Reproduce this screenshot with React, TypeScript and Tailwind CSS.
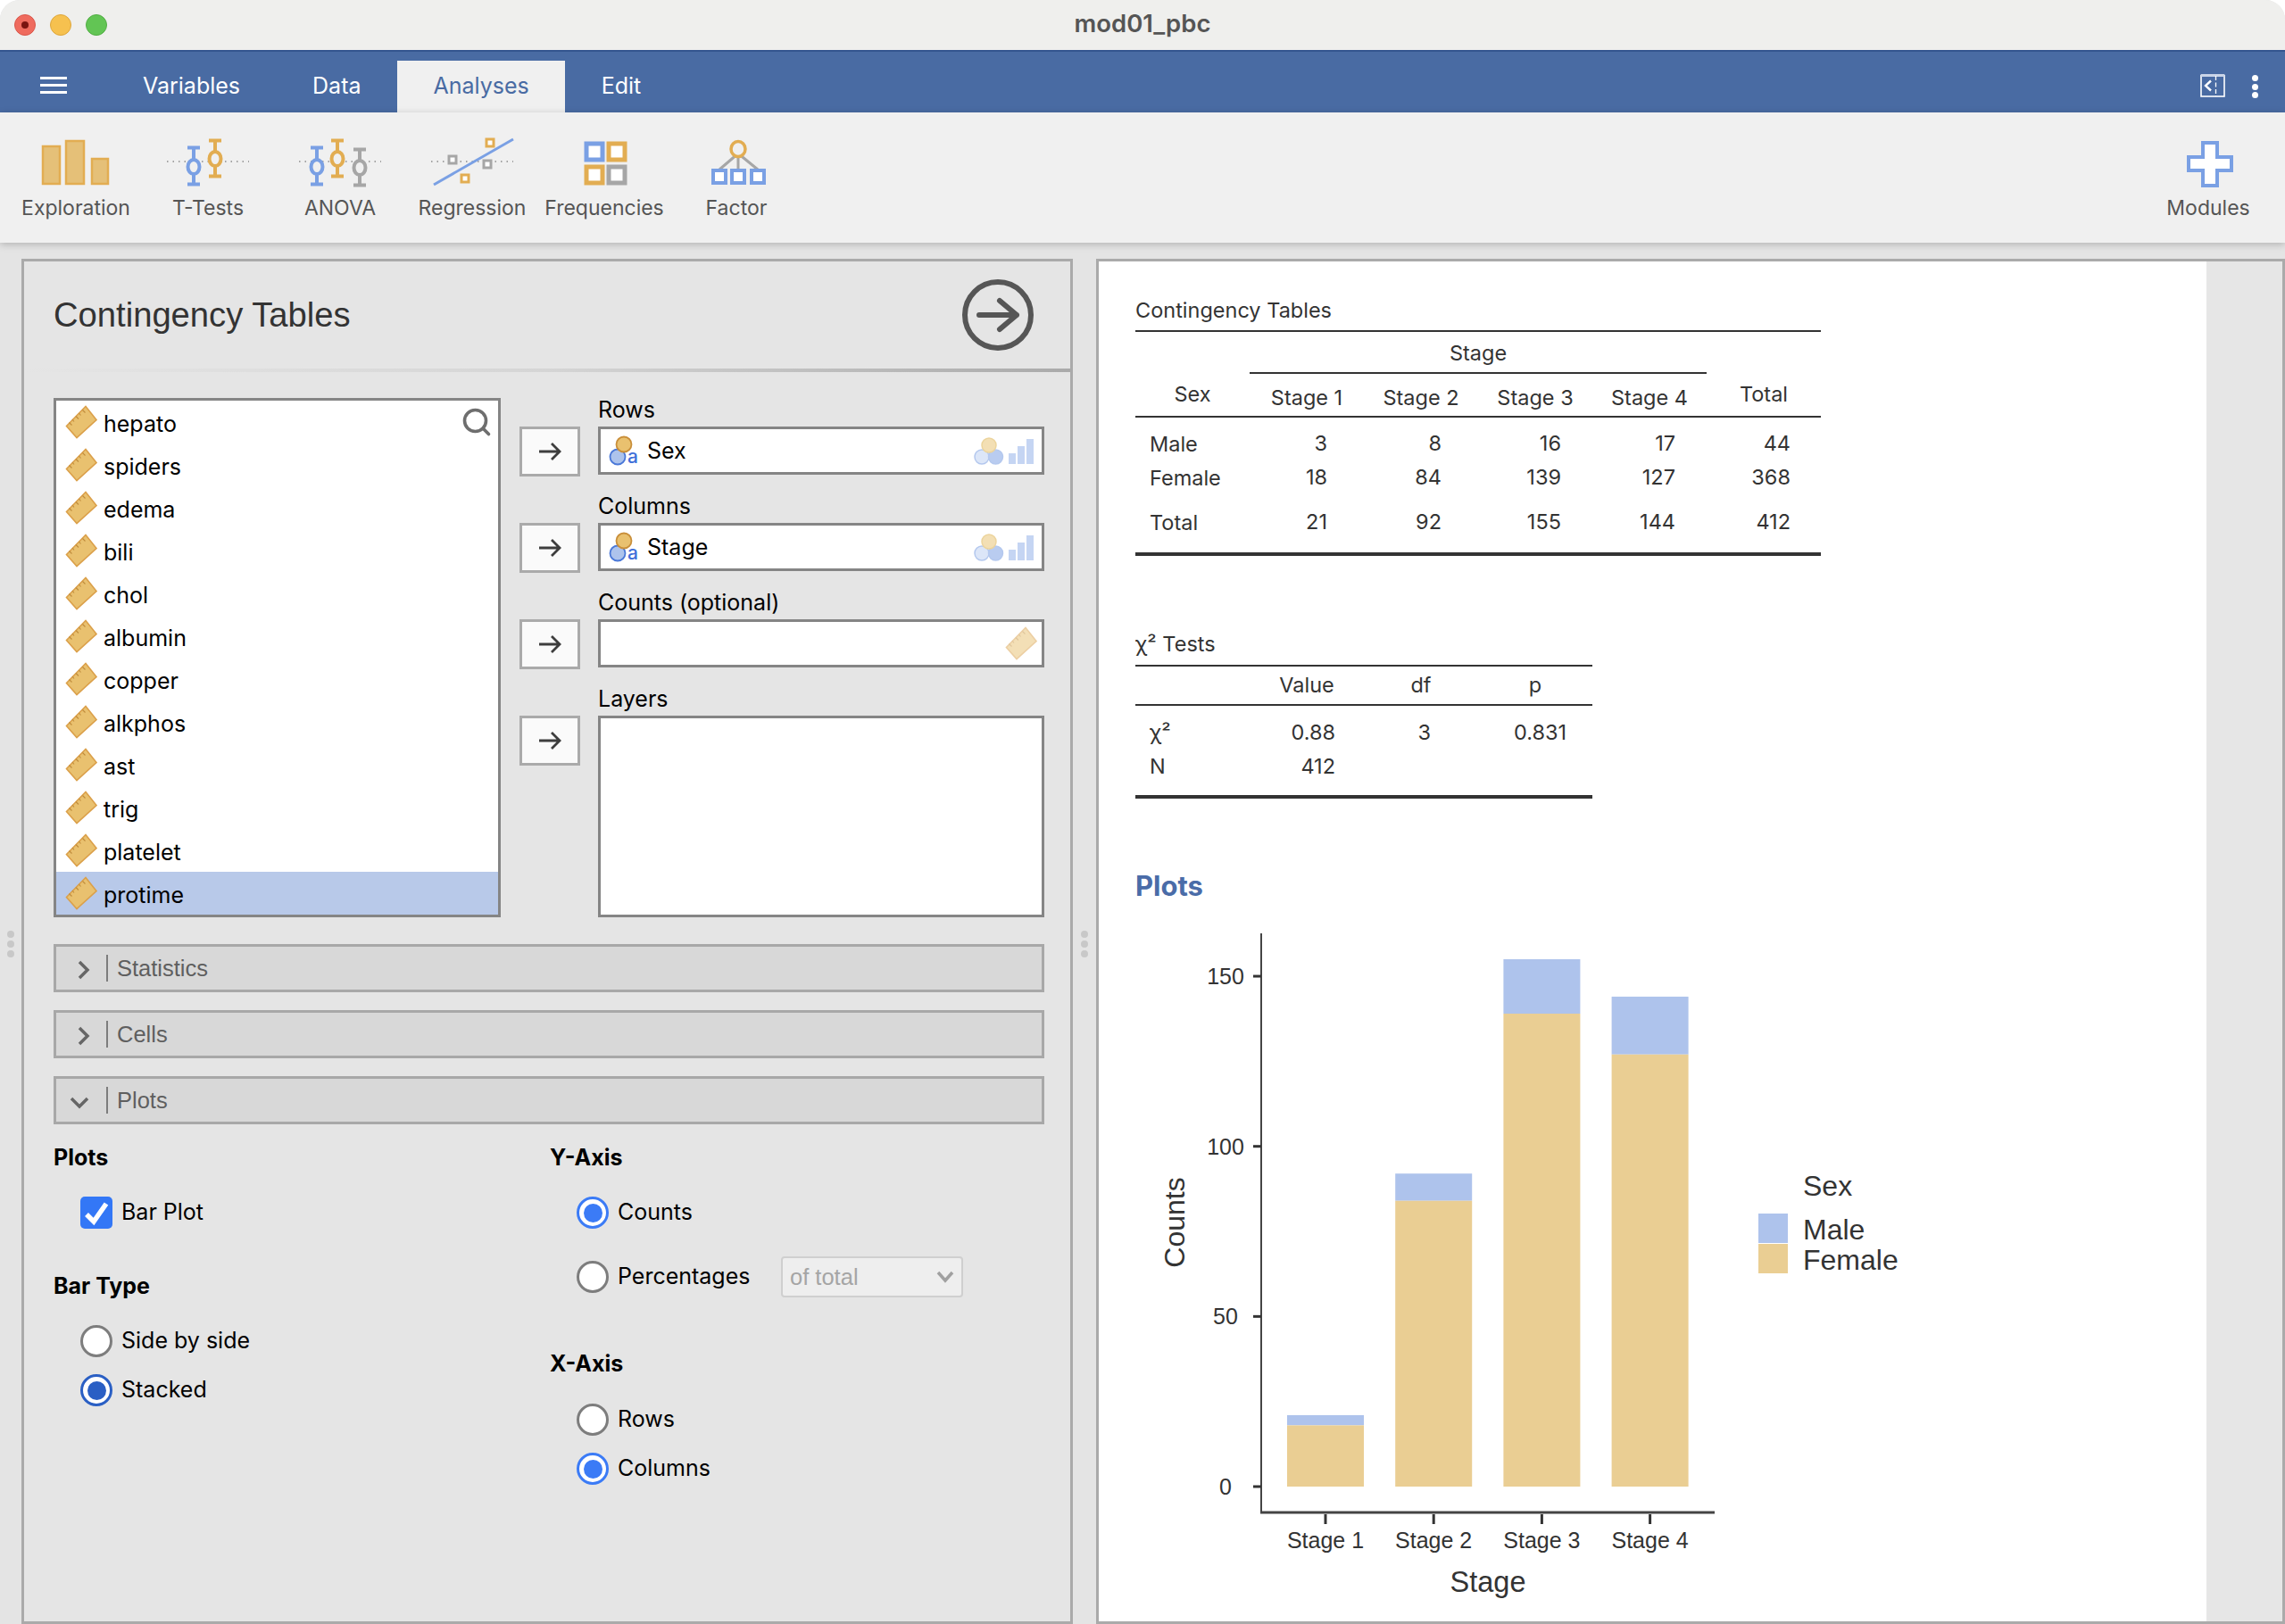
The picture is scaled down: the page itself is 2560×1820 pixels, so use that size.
import { Search } from 'lucide-react'

const vars = ['hepato', 'spiders', 'edema', 'bili', 'chol', 'albumin', 'copper', 'alkphos', 'ast', 'trig', 'platelet', 'protime']

function RulerIcon({ faded = false }: { faded?: boolean }) {
  return (
    <svg width="36" height="38" viewBox="0 0 36 38" className={faded ? 'opacity-50' : ''}>
      <path d="M23 1.500 35 16.500 13 36.500 1.500 23.500Z" fill="#e9c16f" stroke="#dba04a" strokeWidth="1.600" />
      <path d="M19.500 5.500l3 3M15.500 9l2 2.500M12 12.500l3 3M8 16l2 2.500M4.500 19.500l3 3" stroke="#c08c3c" strokeWidth="1.100" />
    </svg>
  )
}

function ErrorBar({ x, top, bottom, cy, color }: { x: number; top: number; bottom: number; cy: number; color: string }) {
  return (
    <g stroke={color} fill="none">
      <path d={`M${x} ${top}V${cy - 7}M${x} ${cy + 7}V${bottom}`} strokeWidth="4" />
      <path d={`M${x - 7} ${top + 1.5}H${x + 7}M${x - 7} ${bottom - 1.5}H${x + 7}`} strokeWidth="4" />
      <ellipse cx={x} cy={cy} rx="6.500" ry="8" strokeWidth="4" fill="#f0f0f0" />
    </g>
  )
}

const Dots = () => <path d="M4 29H96" stroke="#8a8a8a" strokeWidth="1.500" strokeDasharray="1.500 5" />

function Square({ x, y, s, color, w = 3 }: { x: number; y: number; s: number; color: string; w?: number }) {
  return <rect x={x} y={y} width={s} height={s} fill="#fff" stroke={color} strokeWidth={w} />
}

const blue = '#7aa0e4'
const orange = '#e2ad52'
const gray = '#a6a6a6'

function RibbonIcon({ name }: { name: string }) {
  return (
    <svg width="100" height="60" viewBox="0 0 100 60">
      {name === 'Exploration' && (
        <g fill="#e5c078" stroke="#e2ad52" strokeWidth="2.500">
          <rect x="13" y="12" width="19" height="42" />
          <rect x="39" y="6" width="20" height="48" />
          <rect x="68" y="26" width="18" height="28" />
        </g>
      )}
      {name === 'T-Tests' && (
        <>
          <Dots />
          <ErrorBar x={34} top={12} bottom={56} cy={35} color={blue} />
          <ErrorBar x={58} top={4} bottom={47} cy={26} color={orange} />
        </>
      )}
      {name === 'ANOVA' && (
        <>
          <Dots />
          <ErrorBar x={24} top={12} bottom={56} cy={35} color={blue} />
          <ErrorBar x={47} top={4} bottom={47} cy={26} color={orange} />
          <ErrorBar x={72} top={14} bottom={57} cy={36} color={gray} />
        </>
      )}
      {name === 'Regression' && (
        <>
          <Dots />
          <path d="M7 55 96 4" stroke={blue} strokeWidth="3" />
          <Square x={24} y={23} s={8} color={gray} />
          <Square x={63} y={28} s={8} color={gray} />
          <Square x={66} y={4} s={8} color={orange} />
          <Square x={38} y={44} s={8} color={orange} />
        </>
      )}
      {name === 'Frequencies' && (
        <>
          <Square x={30} y={9} s={18} color={blue} w={5} />
          <Square x={55} y={9} s={18} color={orange} w={5} />
          <Square x={30} y={35} s={18} color={orange} w={5} />
          <Square x={55} y={35} s={18} color={gray} w={5} />
        </>
      )}
      {name === 'Factor' && (
        <>
          <path d="M52 20 31 38M52 20V38M52 20 74 38" stroke={gray} strokeWidth="3" />
          <Square x={24} y={39} s={14} color={blue} w={4} />
          <Square x={45} y={39} s={14} color={blue} w={4} />
          <Square x={67} y={39} s={14} color={blue} w={4} />
          <ellipse cx="52" cy="15" rx="8" ry="8.500" fill="#f0f0f0" stroke={orange} strokeWidth="3.500" />
        </>
      )}
      {name === 'Modules' && (
        <path d="M44 8H60V24H76V39H60V56H44V39H28V24H44Z" fill="#fff" stroke={blue} strokeWidth="4" />
      )}
    </svg>
  )
}

function RibbonItem({ name }: { name: string }) {
  return (
    <div className="flex flex-col items-center w-[148px]">
      <RibbonIcon name={name} />
      <span className="mt-[5px] text-[23px] leading-8 text-[#555555] whitespace-nowrap">{name}</span>
    </div>
  )
}

function NominalIcon() {
  return (
    <svg width="36" height="40" viewBox="0 0 36 40" className="shrink-0 -my-[3px]">
      <circle cx="10" cy="27" r="8.500" fill="#adc3ec" stroke="#4a78d8" strokeWidth="1.800" />
      <circle cx="17" cy="13" r="8.500" fill="#e9c16f" stroke="#c98f3a" strokeWidth="1.800" />
      <text x="21" y="34" fontFamily="Inter, sans-serif" fontSize="21" fontWeight="500" fill="#3e6fd9">a</text>
    </svg>
  )
}

function TargetHint() {
  return (
    <svg width="70" height="34" viewBox="0 0 70 34">
      <circle cx="11" cy="24" r="8" fill="#dce6f8" stroke="#b4c8ee" strokeWidth="1.500" />
      <circle cx="26.500" cy="24" r="8" fill="#b9ccf0" stroke="#b4c8ee" strokeWidth="1.500" />
      <circle cx="19" cy="11" r="8" fill="#f3dfb4" stroke="#ecd49c" strokeWidth="1.500" />
      <rect x="41" y="20" width="8" height="12" fill="#c5d5f3" />
      <rect x="51" y="12" width="8" height="20" fill="#c5d5f3" />
      <rect x="61" y="4" width="8" height="28" fill="#c5d5f3" />
    </svg>
  )
}

function ArrowGlyph() {
  return (
    <svg width="26" height="22" viewBox="0 0 26 22" fill="none" stroke="#3d3d3d" strokeWidth="2.800">
      <path d="M1 11H24M15 2l9 9-9 9" />
    </svg>
  )
}

function Target({ label, value, counts, tall }: { label: string; value?: string; counts?: boolean; tall?: boolean }) {
  return (
    <div className="grid grid-cols-[68px_500px] gap-x-5 mb-5 last:mb-0">
      <div />
      <div className="h-8 text-[25px] leading-[26px] text-black">{label}</div>
      <button className="h-14 bg-[#fafafa] border-[3px] border-[#aaaaaa] flex items-center justify-center">
        <ArrowGlyph />
      </button>
      <div className={`${tall ? 'h-[226px]' : 'h-[54px]'} bg-white border-[3px] border-[#858585] flex items-center justify-between pl-[9px] pr-[8px]`}>
        {value ? (
          <>
            <div className="flex items-center gap-[7px] text-[25px] text-black">
              <NominalIcon />
              <span className="pt-[2px]">{value}</span>
            </div>
            <TargetHint />
          </>
        ) : counts ? (
          <div className="ml-auto -mr-[3px]">
            <RulerIcon faded />
          </div>
        ) : null}
      </div>
    </div>
  )
}

function Group({ label, open }: { label: string; open?: boolean }) {
  return (
    <div className="w-[1110px] h-[54px] mb-5 bg-[#d8d8d8] border-[3px] border-[#a8a8a8] flex items-center">
      <div className="w-14 h-full flex items-center justify-center">
        <svg width="22" height="22" viewBox="0 0 22 22" fill="none" stroke="#666666" strokeWidth="3.500" className={open ? 'mt-1 -ml-1' : 'mt-1 ml-[3px]'}>
          {open ? <path d="M2 7l9 9 9-9" /> : <path d="M7 2l9 9-9 9" />}
        </svg>
      </div>
      <div className="w-[2px] h-[30px] bg-[#7d7d7d]" />
      <span className="ml-[10px] text-[25.500px] text-[#5f5f5f] [font-family:'Liberation_Sans',sans-serif]">{label}</span>
    </div>
  )
}

function Radio({ label, checked, dark }: { label: string; checked?: boolean; dark?: boolean }) {
  return (
    <div className="flex items-center gap-[10px] h-9 text-[25px] text-black">
      <span className={`w-9 h-9 rounded-full bg-white border-[3px] flex items-center justify-center ${checked ? (dark ? 'border-[#2a5fc4]' : 'border-[#3b7bf6]') : 'border-[#7d7d7d]'}`}>
        {checked && <span className={`w-[21px] h-[21px] rounded-full ${dark ? 'bg-[#2a5fc4]' : 'bg-[#3b7bf6]'}`} />}
      </span>
      {label}
    </div>
  )
}

const h3 = 'h-[34px] text-[25px] leading-[34px] font-bold text-black'

function Editor() {
  return (
    <section className="w-[1178px] shrink-0 bg-[#e5e5e5] border-[3px] border-[#aaaaaa] overflow-hidden">
      <header className="h-[120px] pl-[33px] pr-[39px] flex items-center justify-between">
        <h1 className="text-[38.200px] text-[#333333] [font-family:'Liberation_Sans',sans-serif]">Contingency Tables</h1>
        <svg width="84" height="84" viewBox="0 0 84 84" fill="none" stroke="#565656" strokeWidth="6" strokeLinecap="round" strokeLinejoin="round">
          <circle cx="42" cy="42" r="37" />
          <path d="M21 42H63M44 26l19 16-19 16" />
        </svg>
      </header>
      <div className="h-1 bg-gradient-to-r from-[#e5e5e5] via-[#d5d5d5] to-[#aaaaaa]" />
      <div className="px-[33px] pt-[29px]">
        <div className="flex gap-[21px]">
          <div className="relative w-[501px] h-[582px] shrink-0 bg-white border-[3px] border-[#858585]">
            {vars.map(v => (
              <div key={v} className={`h-12 pl-[10px] flex items-center gap-[7px] text-[25px] text-black ${v === 'protime' ? 'bg-[#b8c9e9]' : ''}`}>
                <RulerIcon />
                <span className="pt-[5px]">{v}</span>
              </div>
            ))}
            <Search className="absolute top-[6px] right-[6px] text-[#6e6e6e]" size={36} strokeWidth={2.4} />
          </div>
          <div>
            <Target label="Rows" value="Sex" />
            <Target label="Columns" value="Stage" />
            <Target label="Counts (optional)" counts />
            <Target label="Layers" tall />
          </div>
        </div>
        <div className="mt-[30px]">
          <Group label="Statistics" />
          <Group label="Cells" />
          <Group label="Plots" open />
        </div>
        <div className="flex mt-[11px]">
          <div className="w-[556px] shrink-0">
            <div className={h3}>Plots</div>
            <div className="ml-[30px] mt-[27px] flex items-center gap-[10px] h-9 text-[25px] text-black">
              <span className="w-9 h-9 rounded-[5px] bg-[#3377f6] flex items-center justify-center">
                <svg width="36" height="36" viewBox="0 0 36 36" fill="none" stroke="#ffffff" strokeWidth="5.500"><path d="M7 20l8 8L29 8" /></svg>
              </span>
              Bar Plot
            </div>
            <div className={`${h3} mt-[47px]`}>Bar Type</div>
            <div className="ml-[30px] mt-[27px] flex flex-col gap-[19px]">
              <Radio label="Side by side" />
              <Radio label="Stacked" checked dark />
            </div>
          </div>
          <div>
            <div className={h3}>Y-Axis</div>
            <div className="ml-[30px] mt-[27px]"><Radio label="Counts" checked /></div>
            <div className="ml-[30px] mt-[31px] flex items-center">
              <div className="w-[229px]"><Radio label="Percentages" /></div>
              <div className="w-[204px] h-[46px] rounded-[4px] bg-[#eeeeee] border-[2px] border-[#cfcfcf] pl-2 pr-2 flex items-center justify-between text-[25.500px] text-[#a5a5a5] [font-family:'Liberation_Sans',sans-serif]">
                of total
                <svg width="20" height="14" viewBox="0 0 20 14" fill="none" stroke="#a0a0a0" strokeWidth="3.500"><path d="M2 2l8 9 8-9" /></svg>
              </div>
            </div>
            <div className={`${h3} mt-[57px]`}>X-Axis</div>
            <div className="ml-[30px] mt-[28px] flex flex-col gap-[19px]">
              <Radio label="Rows" />
              <Radio label="Columns" checked />
            </div>
          </div>
        </div>
      </div>
    </section>
  )
}

const cols = ['Stage 1', 'Stage 2', 'Stage 3', 'Stage 4']
const rows = [
  { name: 'Male', cells: ['3', '8', '16', '17', '44'], h: 'h-[38px]' },
  { name: 'Female', cells: ['18', '84', '139', '127', '368'], h: 'h-[38px]' },
  { name: 'Total', cells: ['21', '92', '155', '144', '412'], h: 'h-[50px] pt-[12px]' },
]
const pads = ['pr-[41px]', 'pr-[41px]', 'pr-[35px]', 'pr-[35px]', 'pr-[34px]']

function ContingencyTable() {
  return (
    <div className="w-[768px] text-[23.500px] text-[#333333]">
      <div className="h-[38px] leading-8">Contingency Tables</div>
      <div className="h-[2px] bg-[#333333]" />
      <div className="grid grid-cols-6 h-[96px] border-b-[2px] border-[#333333]">
        <div className="row-span-2 flex items-end justify-center pb-[7px]">Sex</div>
        <div className="col-span-4 h-[47px] flex items-center justify-center border-b-[2px] border-[#333333] pt-[2px]">Stage</div>
        <div className="row-span-2 flex items-end justify-center pb-[7px]">Total</div>
        {cols.map(c => (
          <div key={c} className="col-span-1 flex items-center justify-center">{c}</div>
        ))}
      </div>
      <div className="pt-[10px] pb-[15px] border-b-[4px] border-[#333333]">
        {rows.map(r => (
          <div key={r.name} className={`grid grid-cols-6 items-center ${r.h}`}>
            <div className="pl-4 translate-y-[1px]">{r.name}</div>
            {r.cells.map((c, i) => (
              <div key={i} className={`text-right ${pads[i]}`}>{c}</div>
            ))}
          </div>
        ))}
      </div>
    </div>
  )
}

function ChiTable() {
  return (
    <div className="w-[512px] mt-[83px] text-[23.500px] text-[#333333]">
      <div className="h-[39px] leading-8">χ² Tests</div>
      <div className="h-[2px] bg-[#333333]" />
      <div className="grid grid-cols-4 h-[44px] items-center border-b-[2px] border-[#333333] text-center">
        <div />
        <div>Value</div>
        <div>df</div>
        <div>p</div>
      </div>
      <div className="pt-[11px] pb-[13px] border-b-[4px] border-[#333333]">
        <div className="grid grid-cols-4 h-[38px] items-center">
          <div className="pl-4">χ²</div>
          <div className="text-right pr-[32px]">0.88</div>
          <div className="text-right pr-[53px]">3</div>
          <div className="text-right pr-[29px]">0.831</div>
        </div>
        <div className="grid grid-cols-4 h-[38px] items-center">
          <div className="pl-4">N</div>
          <div className="text-right pr-[32px]">412</div>
        </div>
      </div>
    </div>
  )
}

const stages = [
  { label: 'Stage 1', male: 3, female: 18 },
  { label: 'Stage 2', male: 8, female: 84 },
  { label: 'Stage 3', male: 16, female: 139 },
  { label: 'Stage 4', male: 17, female: 127 },
]

// svg origin sits at page (1272, 1030)
function BarChart() {
  const zero = 636
  const unit = 3.813
  return (
    <svg width="900" height="770" viewBox="0 0 900 770" fontFamily="Liberation Sans, sans-serif" fill="#333333" className="mt-[17px]">
      <path d="M141 16V666" fill="none" stroke="#444444" strokeWidth="2" />
      <path d="M140 665H649" fill="none" stroke="#444444" strokeWidth="3" />
      {[0, 50, 100, 150].map(t => (
        <g key={t}>
          <path d={`M132 ${zero - t * unit}H141`} stroke="#333333" strokeWidth="3" />
          <text x="101" y={zero - t * unit + 9} textAnchor="middle" fontSize="25">{t}</text>
        </g>
      ))}
      {stages.map((s, i) => {
        const cx = 213 + i * 121.2
        const fTop = zero - s.female * unit
        const mTop = zero - (s.female + s.male) * unit
        return (
          <g key={s.label}>
            <rect x={cx - 43} y={mTop} width="86" height={fTop - mTop} fill="#aec3ec" />
            <rect x={cx - 43} y={fTop} width="86" height={zero - fTop} fill="#eace93" />
            <path d={`M${cx} 667V678`} stroke="#333333" strokeWidth="3" />
            <text x={cx} y="705" textAnchor="middle" fontSize="25">{s.label}</text>
          </g>
        )
      })}
      <text x="395" y="754" textAnchor="middle" fontSize="32.500">Stage</text>
      <text transform="translate(55 340) rotate(-90)" textAnchor="middle" fontSize="32">Counts</text>
      <text x="748" y="310" fontSize="32">Sex</text>
      <rect x="698" y="330" width="33" height="33" fill="#aec3ec" />
      <rect x="698" y="364" width="33" height="33" fill="#eace93" />
      <text x="748" y="359" fontSize="32">Male</text>
      <text x="748" y="393" fontSize="32">Female</text>
    </svg>
  )
}

function Results() {
  return (
    <section className="flex-1 flex bg-[#e6e6e6] border-[3px] border-[#aaaaaa] overflow-hidden">
      <div className="w-[1241px] bg-white pl-[41px] pt-[39px]">
        <ContingencyTable />
        <ChiTable />
        <div className="mt-[78px] h-[40px] text-[31px] leading-[40px] font-bold text-[#4a6ca8]">Plots</div>
        <BarChart />
      </div>
    </section>
  )
}

function Handle({ width }: { width: string }) {
  return (
    <div className={`${width} shrink-0 self-start mt-[753px] flex flex-col items-center gap-[3px]`}>
      <span className="w-2 h-2 rounded-full bg-[#c8c8c8]" />
      <span className="w-2 h-2 rounded-full bg-[#c8c8c8]" />
      <span className="w-2 h-2 rounded-full bg-[#c8c8c8]" />
    </div>
  )
}

export default function App() {
  return (
    <div className="w-[2560px] h-[1820px] bg-white [font-family:Inter,sans-serif]">
      <div className="h-full rounded-t-[22px] overflow-hidden flex flex-col bg-[#e4e4e4]">
        <div className="h-14 shrink-0 bg-[#efefed] relative flex items-center justify-center">
          <div className="absolute left-4 top-4 flex gap-4">
            <span className="w-6 h-6 rounded-full bg-[#ef6b5e] border border-[#d9584c] flex items-center justify-center">
              <span className="w-2 h-2 rounded-full bg-[#7a1410]" />
            </span>
            <span className="w-6 h-6 rounded-full bg-[#f6c14f] border border-[#dda63c]" />
            <span className="w-6 h-6 rounded-full bg-[#62c554] border border-[#52ad45]" />
          </div>
          <span className="text-[27.500px] font-semibold text-[#555555] -mt-[3px]">mod01_pbc</span>
        </div>

        <div className="h-[70px] shrink-0 bg-[#496ba3] border-t-2 border-[#34558f] flex items-end">
          <div className="w-[120px] h-full flex items-center pl-[45px]">
            <div className="mt-[6px] w-[30px] flex flex-col gap-[5px]">
              <span className="h-[3px] bg-white" />
              <span className="h-[3px] bg-white" />
              <span className="h-[3px] bg-white" />
            </div>
          </div>
          <div className="flex gap-px text-[25px]">
            <div className="h-[58px] px-10 flex items-center text-white">Variables</div>
            <div className="h-[58px] px-10 flex items-center text-white">Data</div>
            <div className="h-[58px] px-10 flex items-center bg-[#f0f0f0] text-[#496ba3]">Analyses</div>
            <div className="h-[58px] px-10 flex items-center text-white">Edit</div>
          </div>
          <div className="ml-auto h-[58px] flex items-center pr-[30px] gap-[30px]">
            <svg width="28" height="26" viewBox="0 0 28 26" fill="none" stroke="#ffffff" className="-mt-[3px]">
              <rect x="1" y="1.500" width="26" height="23.500" strokeWidth="1.600" />
              <path d="M1 1.500H27" stroke="#c9d4e8" strokeWidth="3" />
              <path d="M17.500 2V25" strokeWidth="1.300" strokeDasharray="5 2.500" />
              <path d="M12 7.500 6 13l6 5.500" strokeWidth="2.400" />
            </svg>
            <div className="flex flex-col gap-[2.500px]">
              <span className="w-[7px] h-[7px] rounded-full bg-white" />
              <span className="w-[7px] h-[7px] rounded-full bg-white" />
              <span className="w-[7px] h-[7px] rounded-full bg-white" />
            </div>
          </div>
        </div>

        <div className="h-[146px] shrink-0 bg-[#f0f0f0] flex items-start pt-[26px] pl-[11px] pr-[12px] shadow-[0_2px_8px_rgba(0,0,0,0.22)] relative">
          <RibbonItem name="Exploration" />
          <RibbonItem name="T-Tests" />
          <RibbonItem name="ANOVA" />
          <RibbonItem name="Regression" />
          <RibbonItem name="Frequencies" />
          <RibbonItem name="Factor" />
          <div className="ml-auto"><RibbonItem name="Modules" /></div>
        </div>

        <main className="flex-1 min-h-0 flex pt-[18px]">
          <Handle width="w-6" />
          <Editor />
          <Handle width="w-[26px]" />
          <Results />
        </main>
      </div>
    </div>
  )
}
